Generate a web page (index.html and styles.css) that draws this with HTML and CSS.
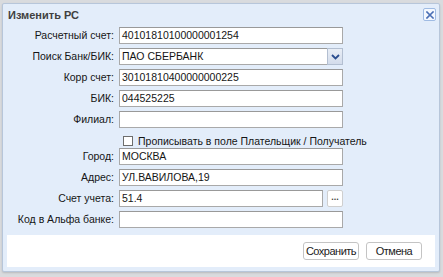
FILE: index.html
```html
<!DOCTYPE html>
<html lang="ru">
<head>
<meta charset="utf-8">
<title>Изменить РС</title>
<link rel="stylesheet" href="styles.css">
</head>
<body>
<div class="backdrop">
  <div class="dialog">
    <div class="title-bar">
      <span class="title">Изменить РС</span>
      <span class="close-btn">
        <svg width="8" height="8" viewBox="0 0 8 8"><path d="M1 1 L7 7 M7 1 L1 7" stroke="#4a6fb5" stroke-width="1.6" stroke-linecap="square"/></svg>
      </span>
    </div>
    <div class="form">
      <label class="lbl">Расчетный счет:</label>
      <div class="field"><span class="input">40101810100000001254</span></div>

      <label class="lbl">Поиск Банк/БИК:</label>
      <div class="field combo">
        <span class="input combo-input">ПАО СБЕРБАНК</span>
        <span class="trigger">
          <svg width="9" height="6" viewBox="0 0 9 6"><path d="M1 1 L4.5 4.5 L8 1" fill="none" stroke="#2a4d8f" stroke-width="1.8"/></svg>
        </span>
      </div>

      <label class="lbl">Корр счет:</label>
      <div class="field"><span class="input">30101810400000000225</span></div>

      <label class="lbl">БИК:</label>
      <div class="field"><span class="input">044525225</span></div>

      <label class="lbl">Филиал:</label>
      <div class="field"><span class="input"></span></div>

      <span class="lbl"></span>
      <div class="check-row">
        <span class="checkbox"></span>
        <span class="check-text">Прописывать в поле Плательщик / Получатель</span>
      </div>

      <label class="lbl">Город:</label>
      <div class="field"><span class="input">МОСКВА</span></div>

      <label class="lbl">Адрес:</label>
      <div class="field"><span class="input">УЛ.ВАВИЛОВА,19</span></div>

      <label class="lbl">Счет учета:</label>
      <div class="field combo">
        <span class="input short">51.4</span>
        <span class="dots-btn">...</span>
      </div>

      <label class="lbl">Код в Альфа банке:</label>
      <div class="field"><span class="input"></span></div>
    </div>
    <div class="footer">
      <span class="btn">Сохранить</span>
      <span class="btn">Отмена</span>
    </div>
  </div>
</div>
</body>
</html>
```
FILE: styles.css
```css
* { box-sizing: border-box; }
html, body { margin: 0; padding: 0; }
body {
  width: 443px;
  height: 277px;
  background: #d9dbde;
  font-family: "Liberation Sans", Arial, sans-serif;
  font-size: 10.5px;
  color: #151515;
  overflow: hidden;
}
.backdrop {
  padding: 3px 3px 0 2px;
}
.dialog {
  width: 438px;
  height: 269px;
  background: #e3edfa;
  border: 1px solid #b7c6da;
  border-radius: 2px;
  box-shadow: 0 1px 2px rgba(0,0,0,0.15);
  display: flex;
  flex-direction: column;
}
.title-bar {
  height: 21px;
  display: flex;
  align-items: center;
  justify-content: space-between;
  padding: 0 3px 0 5px;
}
.title {
  font-weight: bold;
  color: #404040;
  font-size: 11px;
}
.close-btn {
  width: 13px;
  height: 13px;
  border: 1px solid #9fbbe3;
  border-radius: 2px;
  background: #f4f8fe;
  display: flex;
  align-items: center;
  justify-content: center;
}
.form {
  display: grid;
  grid-template-columns: 111px 224px;
  grid-template-rows: repeat(5, 17px) 12px repeat(4, 17px);
  column-gap: 5px;
  row-gap: 4px;
  padding-top: 2px;
}
.lbl {
  text-align: right;
  line-height: 17px;
  white-space: nowrap;
}
.field {
  display: flex;
  height: 17px;
}
.input {
  flex: 1;
  height: 17px;
  background: #fff;
  border: 1px solid #a9a9a9;
  border-top-color: #999;
  padding: 0 2px;
  line-height: 15px;
  white-space: nowrap;
  overflow: hidden;
}
.combo-input { border-right: none; }
.trigger {
  width: 16px;
  height: 17px;
  background: linear-gradient(#e9eef6, #d3dceb);
  border: 1px solid #b3bfd1;
  display: flex;
  align-items: center;
  justify-content: center;
}
.short { flex: none; width: 204px; }
.dots-btn {
  margin-left: 4px;
  width: 16px;
  height: 17px;
  background: #fff;
  border: 1px solid #cfcfcf;
  border-radius: 2px;
  font-size: 9px;
  font-weight: bold;
  line-height: 13px;
  text-align: center;
  color: #444;
}
.check-row {
  display: flex;
  align-items: center;
  padding: 4px 0 0 4px;
  height: 14px;
}
.checkbox {
  width: 10px;
  height: 10px;
  background: #fff;
  border: 1px solid #6d6d6d;
  margin-right: 5px;
  flex: none;
}
.check-text { white-space: nowrap; }
.footer {
  margin: 7px 4px 0 4px;
  height: 32px;
  background: #fff;
  display: flex;
  justify-content: flex-end;
  align-items: flex-start;
  gap: 7px;
  padding: 7px 13px 0 0;
}
.btn {
  width: 56px;
  height: 18px;
  border: 1px solid #c4c4c4;
  border-radius: 3px;
  background: #fff;
  text-align: center;
  line-height: 16px;
  font-size: 11px;
  letter-spacing: -0.5px;
  color: #222;
}
```
